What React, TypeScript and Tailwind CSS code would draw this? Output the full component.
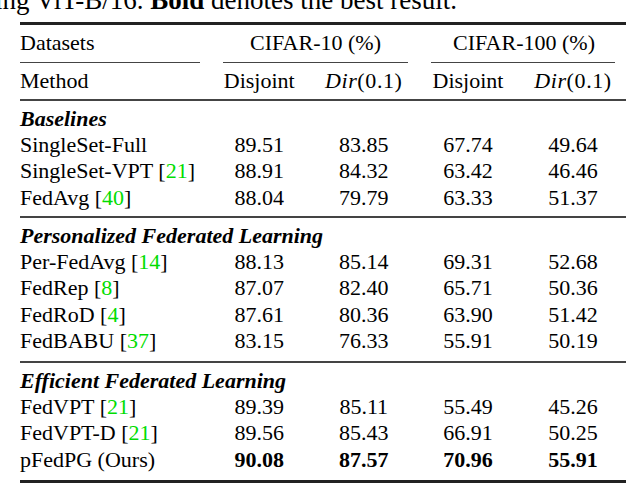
import React from 'react'

const GREEN = 'text-[#00dd00]'

type Row = { name: string; cite?: string; vals: string[]; bold?: boolean }

const sections: { title: string; rows: Row[] }[] = [
  {
    title: 'Baselines',
    rows: [
      { name: 'SingleSet-Full', vals: ['89.51', '83.85', '67.74', '49.64'] },
      { name: 'SingleSet-VPT', cite: '21', vals: ['88.91', '84.32', '63.42', '46.46'] },
      { name: 'FedAvg', cite: '40', vals: ['88.04', '79.79', '63.33', '51.37'] },
    ],
  },
  {
    title: 'Personalized Federated Learning',
    rows: [
      { name: 'Per-FedAvg', cite: '14', vals: ['88.13', '85.14', '69.31', '52.68'] },
      { name: 'FedRep', cite: '8', vals: ['87.07', '82.40', '65.71', '50.36'] },
      { name: 'FedRoD', cite: '4', vals: ['87.61', '80.36', '63.90', '51.42'] },
      { name: 'FedBABU', cite: '37', vals: ['83.15', '76.33', '55.91', '50.19'] },
    ],
  },
  {
    title: 'Efficient Federated Learning',
    rows: [
      { name: 'FedVPT', cite: '21', vals: ['89.39', '85.11', '55.49', '45.26'] },
      { name: 'FedVPT-D', cite: '21', vals: ['89.56', '85.43', '66.91', '50.25'] },
      { name: 'pFedPG (Ours)', vals: ['90.08', '87.57', '70.96', '55.91'], bold: true },
    ],
  },
]

const grid = 'grid grid-cols-[187px_104.5px_104.5px_104px_106px] items-center'

function Dir() {
  return (
    <span className="tracking-[0.6px]">
      <span className="italic">Dir</span>(0.1)
    </span>
  )
}

export default function App() {
  return (
    <div
      className="w-[628px] h-[484px] overflow-hidden bg-white text-black text-[22px]"
      style={{ fontFamily: '"Liberation Serif", "Times New Roman", serif' }}
    >
      {/* caption tail, cut at the top */}
      <div className="h-[22px] overflow-hidden">
        <p className="-mt-[13px] ml-[-5px] text-[27px] leading-[27px] whitespace-nowrap">
          ing ViT-B/16. <b>Bold</b> denotes the best result.
        </p>
      </div>

      <div className="ml-[20px] w-[606px]">
        <div className="h-[3px] bg-[#222]" />

        {/* header */}
        <div className={`${grid} mt-[5px] h-[26px] leading-none`}>
          <div>Datasets</div>
          <div className="col-span-2 text-center pl-[8px]">CIFAR-10 (%)</div>
          <div className="col-span-2 text-center pl-[6px]">CIFAR-100 (%)</div>
        </div>
        <div className="mt-[6px] flex h-px">
          <div className="w-[180px] bg-[#444]" />
          <div className="ml-[23px] w-[185px] bg-[#444]" />
          <div className="ml-[23px] w-[184px] bg-[#444]" />
        </div>
        <div className={`${grid} mt-[5px] h-[26px] leading-none text-center`}>
          <div className="text-left">Method</div>
          <div>Disjoint</div>
          <div>
            <Dir />
          </div>
          <div>Disjoint</div>
          <div>
            <Dir />
          </div>
        </div>
        <div className="mt-[5px] h-[2px] bg-[#444]" />

        {sections.map((s, si) => (
          <div key={s.title}>
            <div className={si === 0 ? 'pt-[4px] pb-[5px]' : si === 1 ? 'pt-[4px] pb-[6.5px]' : 'pt-[4px] pb-[7px]'}>
              <div className="h-[26.5px] flex items-center font-bold italic whitespace-nowrap">{s.title}</div>
              {s.rows.map((r) => (
                <div key={r.name} className={`${grid} h-[26.5px] leading-none text-center`}>
                  <div className="text-left whitespace-nowrap">
                    {r.name}
                    {r.cite && (
                      <>
                        {' '}[<span className={GREEN}>{r.cite}</span>]
                      </>
                    )}
                  </div>
                  {r.vals.map((v, i) => (
                    <div key={i} className={r.bold ? 'font-bold' : ''}>
                      {v}
                    </div>
                  ))}
                </div>
              ))}
            </div>
            <div className={si === 2 ? 'h-[3px] bg-[#222]' : 'h-[2px] bg-[#444]'} />
          </div>
        ))}
      </div>
    </div>
  )
}
